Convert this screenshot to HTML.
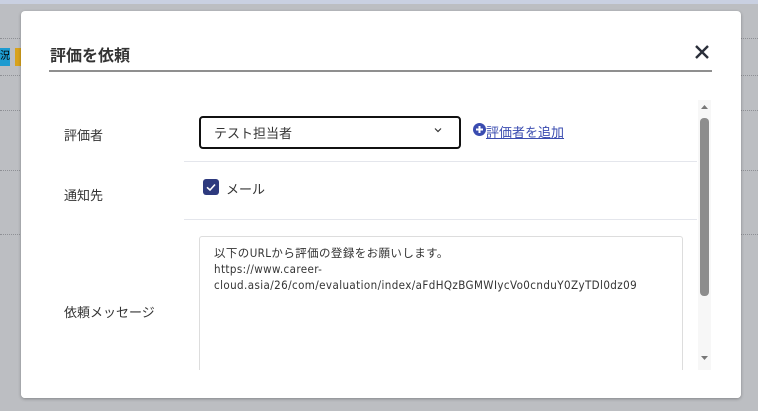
<!DOCTYPE html>
<html><head><meta charset="utf-8"><style>
body{margin:0;width:758px;height:411px;background:#bcbec2;position:relative;overflow:hidden;font-family:"Liberation Sans","Noto Sans CJK JP",sans-serif;color:#222}
.top{position:absolute;left:0;top:0;width:758px;height:4px;background:#c9d0e1}
.dot{position:absolute;left:0;width:758px;border-top:1px dotted #8e9095}
.modal{position:absolute;left:21px;top:11px;width:720px;height:387px;background:#fff;border-radius:4px;box-shadow:0 1px 3px rgba(0,0,0,.3)}
.abs{position:absolute}
.lbl{position:absolute;left:64px;font-size:13px;color:#333}
</style></head><body>
<div class="top"></div>
<div class="dot" style="top:38px"></div>
<div class="dot" style="top:75px"></div>
<div class="dot" style="top:110px"></div>
<div class="dot" style="top:170px"></div>
<div class="dot" style="top:234px"></div>
<div class="abs" style="left:0;top:48px;width:10px;height:18px;background:#1e9bd0;color:#000;font-size:10px;line-height:18px">況</div>
<div class="abs" style="left:15px;top:48px;width:6px;height:18px;background:#d8a21c"></div>
<div class="modal"></div>
<div class="abs" style="left:50px;top:42px;font-size:16px;font-weight:bold;color:#333">評価を依頼</div>
<div class="abs" style="left:49px;top:70px;width:663px;height:2px;background:#8f8f8f"></div>
<svg class="abs" style="left:694px;top:44px" width="16" height="16" viewBox="0 0 16 16"><path d="M2 2L14 14M14 2L2 14" stroke="#2a2f3a" stroke-width="2.4"/></svg>
<div class="lbl" style="top:125px">評価者</div>
<div class="lbl" style="top:185px">通知先</div>
<div class="lbl" style="top:302px">依頼メッセージ</div>
<div class="abs" style="left:199px;top:116px;width:258px;height:29px;border:2px solid #111;border-radius:4px"></div>
<div class="abs" style="left:214px;top:123px;font-size:13px;color:#333">テスト担当者</div>
<svg class="abs" style="left:434px;top:127px" width="8" height="6" viewBox="0 0 8 6"><path d="M1 1.5L4 4.5L7 1.5" stroke="#333" stroke-width="1.2" fill="none"/></svg>
<svg class="abs" style="left:473px;top:123px" width="13" height="13" viewBox="0 0 13 13"><circle cx="6.5" cy="6.5" r="6.5" fill="#3a4cb0"/><path d="M6.5 3v7M3 6.5h7" stroke="#fff" stroke-width="2"/></svg>
<div class="abs" style="left:486px;top:122px;font-size:13px;color:#3a4cb0;text-decoration:underline">評価者を追加</div>
<div class="abs" style="left:184px;top:161px;width:513px;height:1px;background:#e4e6ec"></div>
<div class="abs" style="left:203px;top:179px;width:16px;height:16px;background:#2e3a7e;border-radius:3px"></div>
<svg class="abs" style="left:203px;top:179px" width="16" height="16" viewBox="0 0 16 16"><path d="M4 8.3L7 11L12 5.5" stroke="#fff" stroke-width="1.6" fill="none"/></svg>
<div class="abs" style="left:226px;top:179px;font-size:13px;color:#333">メール</div>
<div class="abs" style="left:184px;top:219px;width:513px;height:1px;background:#e4e6ec"></div>
<div class="abs" style="left:199px;top:236px;width:482px;height:140px;border:1px solid #ddd;border-bottom:none;border-radius:3px 3px 0 0"></div>
<div class="abs" style="left:214px;top:245px;font-size:11.5px;line-height:16px;color:#333;font-family:'DejaVu Sans Condensed','Liberation Sans','Noto Sans CJK JP',sans-serif;letter-spacing:0.4px;white-space:nowrap">以下のURLから評価の登録をお願いします。<br>https://www.career-<br>cloud.asia/26/com/evaluation/index/aFdHQzBGMWIycVo0cnduY0ZyTDl0dz09</div>
<div class="abs" style="left:698px;top:100px;width:13px;height:270px;background:#f7f7f7"></div>
<div class="abs" style="left:700px;top:118px;width:9px;height:178px;background:#8d8d8d;border-radius:4px"></div>
<svg class="abs" style="left:700px;top:104px" width="9" height="6"><path d="M1 5L4.5 1L8 5Z" fill="#777"/></svg>
<svg class="abs" style="left:700px;top:355px" width="9" height="6"><path d="M1 1L4.5 5L8 1Z" fill="#777"/></svg>
<div class="abs" style="left:21px;top:370px;width:720px;height:28px;background:#fff;border-radius:0 0 4px 4px"></div>
</body></html>
